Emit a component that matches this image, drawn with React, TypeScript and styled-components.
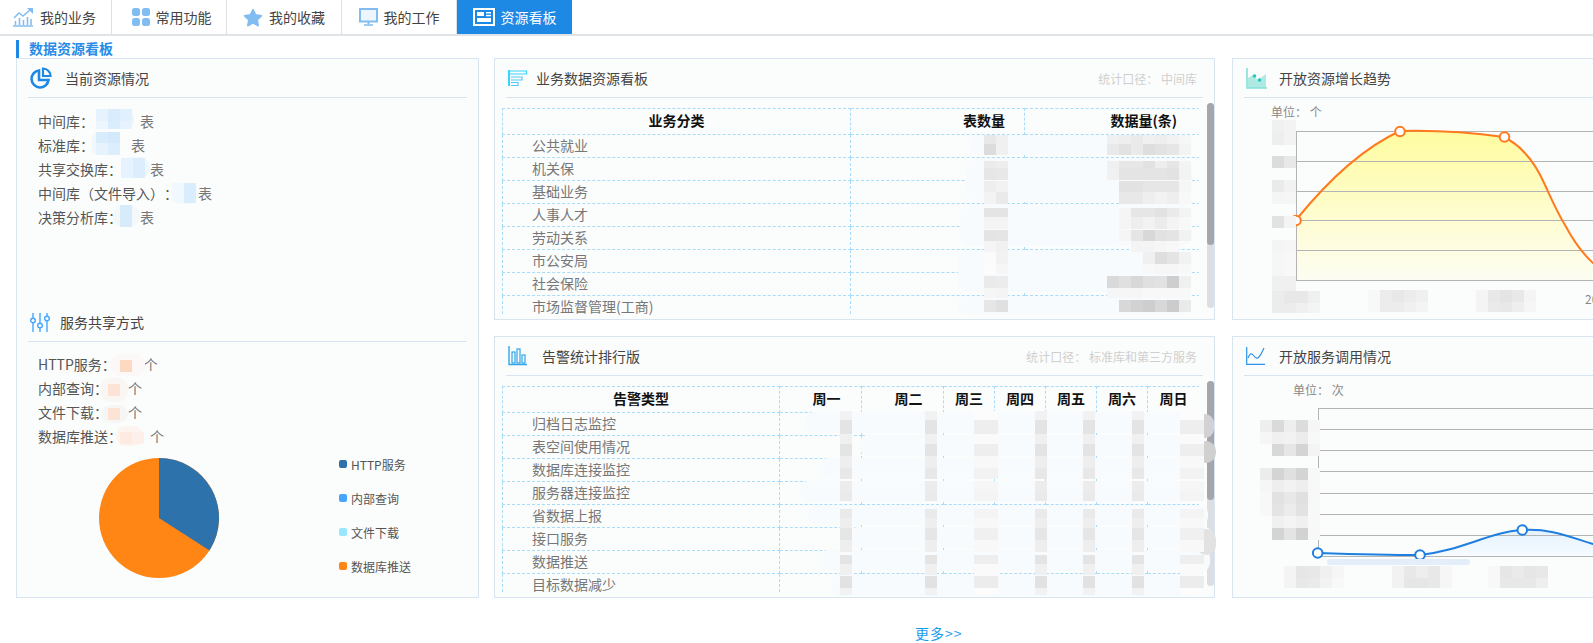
import React from "react";
import styled, { createGlobalStyle } from "styled-components";

const GlobalStyle = createGlobalStyle`
  html, body {
    margin: 0;
    padding: 0;
    height: 100%;
    overflow: hidden;
    background: #fff;
  }
  body {
    font-family: "Noto Sans CJK SC", "Liberation Sans", sans-serif;
    font-size: 14px;
    color: #555;
    text-spacing-trim: space-all;
  }
`;

const Page = styled.div`
  position: relative;
  width: 1593px;
  height: 643px;
  overflow: hidden;
`;

/* top tabs */
const Nav = styled.nav`
  display: flex;
  height: 34px;
  border-bottom: 2px solid #e1e4e7;
`;

const Tab = styled.div<{ $active?: boolean; $w: number; $shift?: number }>`
  display: flex;
  align-items: center;
  justify-content: center;
  gap: 6px;
  width: ${(p) => p.$w}px;
  box-sizing: border-box;
  height: 34px;
  padding-left: ${(p) => Math.max(p.$shift ?? 0, 0)}px;
  padding-right: ${(p) => Math.max(-(p.$shift ?? 0), 0)}px;
  border-right: ${(p) => (p.$active ? "0" : "1px solid #dddfe2")};
  background: ${(p) => (p.$active ? "#1e88e5" : "#fff")};
  color: ${(p) => (p.$active ? "#fff" : "#444")};
  font-size: 14px;
`;

const Heading = styled.h2`
  margin: 4px 0 0 16px;
  height: 18px;
  line-height: 16px;
  padding-left: 10px;
  border-left: 3px solid #1e88e5;
  font-size: 14px;
  font-weight: bold;
  color: #2a8ce6;
`;

const Board = styled.div`
  display: grid;
  grid-template-columns: 462px 722px 722px;
  grid-template-rows: 262px 262px;
  gap: 16px;
  padding-left: 16px;
`;

const Panel = styled.section<{ $tall?: boolean; $mid?: boolean }>`
  box-sizing: border-box;
  grid-row: ${(p) => (p.$tall ? "1 / span 2" : "auto")};
  margin-right: ${(p) => (p.$tall ? "-1px" : p.$mid ? "1px" : "0")};
  padding: 0 11px;
  border: 1px solid #d8e5f0;
  background: #fbfdfd;
  overflow: hidden;
`;

const PanelHead = styled.header`
  display: flex;
  align-items: center;
  height: 38px;
  padding-left: 2px;
  border-bottom: 1px solid #d5e4f0;
`;

const IconSlot = styled.span<{ $w: number }>`
  display: flex;
  align-items: center;
  width: ${(p) => p.$w}px;
  flex: none;
`;

const PanelTitle = styled.h3`
  margin: 0;
  font-size: 14px;
  font-weight: normal;
  color: #444;
  flex: 1;
`;

const Scope = styled.span`
  font-size: 12px;
  color: #cfcfcf;
  margin-right: 6px;
`;

/* left panel */
const Section = styled.div<{ $h?: number }>`
  height: ${(p) => (p.$h ? `${p.$h}px` : "auto")};
`;

const Stats = styled.ul<{ $top: number }>`
  list-style: none;
  margin: 0;
  padding: ${(p) => p.$top}px 0 0 10px;
`;

const Stat = styled.li`
  display: flex;
  height: 24px;
  line-height: 24px;
  color: #555;
`;

const Gap = styled.span<{ $w: number }>`
  width: ${(p) => p.$w}px;
  flex: none;
`;

const Unit = styled.span`
  color: #777;
`;

const PieRow = styled.div`
  display: flex;
`;

const PieBox = styled.svg`
  margin: 10px 0 0 71px;
  flex: none;
`;

const Legend = styled.ul`
  list-style: none;
  margin: -1px 0 0 120px;
  padding: 0;
`;

const LegendItem = styled.li`
  display: flex;
  align-items: center;
  gap: 4px;
  height: 34px;
  font-size: 12px;
  color: #555;
`;

const Swatch = styled.i<{ $c: string }>`
  width: 8px;
  height: 8px;
  border-radius: 2px;
  background: ${(p) => p.$c};
`;

/* tables */
const TableArea = styled.div`
  display: flex;
  margin: 10px 0 0 -4px;
`;

const TableClip = styled.div`
  width: 697px;
  height: 207px;
  overflow: hidden;
  flex: none;
`;

const Table = styled.table`
  width: 697px;
  table-layout: fixed;
  border-collapse: collapse;
`;

const Th = styled.th<{ $align?: string; $pl?: number; $pr?: number }>`
  height: 21px;
  padding: 0 ${(p) => p.$pr ?? 0}px 4px ${(p) => p.$pl ?? 0}px;
  border: 1px dashed #a9dcfa;
  font-size: 14px;
  font-weight: bold;
  color: #111;
  text-align: ${(p) => p.$align ?? "center"};
`;

const Td = styled.td`
  height: 20px;
  padding: 0 0 2px;
  border: 1px dashed #a9dcfa;
  font-size: 14px;
  line-height: 20px;
  color: #777;
  white-space: nowrap;
`;

const NameCell = styled(Td)`
  padding-left: 29px;
`;

const Track = styled.div`
  width: 7px;
  height: 205px;
  margin: -5px 0 0 8px;
  border-radius: 4px;
  background: #dcdee1;
  flex: none;
`;

const Thumb = styled.div<{ $h: number }>`
  height: ${(p) => p.$h}px;
  border-radius: 4px;
  background: #a5a6a9;
`;

/* right charts */
const ChartUnit = styled.div<{ $left: number }>`
  margin: 6px 0 0 ${(p) => p.$left}px;
  height: 16px;
  line-height: 16px;
  font-size: 12px;
  color: #888;
`;

const ChartSvg = styled.svg`
  display: block;
  margin-left: -11px;
`;

const More = styled.div`
  margin-top: 25px;
  padding-left: 915px;
  font-size: 14px;
  letter-spacing: 1px;
  color: #1a9bf0;
`;

/* redaction mosaics laid over the page */
const MosaicRow = styled.div.attrs<{ $x: number; $y: number; $h: number }>((p) => ({
  style: { left: p.$x, top: p.$y, height: p.$h },
}))`
  position: absolute;
  display: flex;
`;

const MosaicCell = styled.i`
  display: block;
  width: 12px;
  height: 100%;
`;

const Smear = styled.div.attrs<{ $x: number; $y: number; $w: number; $h: number; $c: string; $r: number }>((p) => ({
  style: { left: p.$x, top: p.$y, width: p.$w, height: p.$h, background: p.$c, borderRadius: p.$r },
}))`
  position: absolute;
`;

const shade = (t: string) => {
  if (t === "--") return "transparent";
  if (t.length === 2) return `#${t}${t}${t}`;
  return `#${t}`;
};

type Cells = [number, number, number, string];
type Blur = [number, number, number, number, string, number];

const PALE = "#f8fbfe";

const smears: Blur[] = [
  // left, blue values
  [96, 109, 38, 20, "#eef7fe", 9],
  [92, 132, 28, 23, "#f0f8fe", 5],
  [121, 157, 29, 21, "#eef7fe", 10],
  [172, 183, 26, 21, "#f1f8fe", 10],
  [113, 205, 27, 22, "#f3f8fb", 10],
  // left, orange values
  [110, 354, 35, 22, "#fbf8f7", 10],
  [100, 378, 28, 24, "#f9f6f4", 10],
  [101, 405, 27, 18, "#f6f6f5", 9],
  [116, 426, 27, 20, "#fdf4ef", 9],
  // first table
  [970, 135, 222, 20, PALE, 8],
  [966, 158, 226, 44, PALE, 10],
  [960, 204, 232, 42, PALE, 10],
  [958, 250, 234, 42, PALE, 10],
  [958, 296, 234, 18, PALE, 8],
  // second table
  [806, 412, 400, 21, PALE, 8],
  [860, 435, 346, 21, PALE, 8],
  [820, 458, 380, 21, PALE, 8],
  [800, 481, 396, 21, PALE, 8],
  [808, 505, 400, 20, PALE, 8],
  [850, 527, 362, 21, PALE, 8],
  [820, 550, 390, 21, PALE, 8],
  [832, 574, 370, 22, PALE, 8],
  // bits of the blur sitting on the scrollbar
  [1196, 414, 18, 24, "#d2d2d4", 12],
  [1196, 441, 20, 22, "#d0d0d1", 11],
  [1196, 529, 20, 26, "#e2e2e3", 13],
  // chart 2, pale strip under the line
  [1327, 559, 143, 6, "#e3eefa", 3],
];

const mosaics: Cells[] = [
  [96, 109, 12, "e6f3fe d8ecfd e0f0fd"],
  [96, 121, 8, "ecf6fe daedfd e6f3fe"],
  [96, 132, 11, "d8ecfc d4e9fb"],
  [96, 143, 12, "e6f3fd dcedfc"],
  [121, 158, 20, "e6f3fe dceefd"],
  [172, 183, 20, "f1f8fe d9edfd"],
  [120, 205, 22, "d8ebfb"],
  [120, 360, 12, "fdd9c1"],
  [108, 384, 12, "fde3d6"],
  [108, 408, 12, "fde3d6"],
  [120, 432, 12, "fdeae0 fdf0ea"],
];

// first table: value columns
[
  [135, 9, "e8 f0", "f0 ee ea f0 ee f2 f6"],
  [144, 11, "dc f0", "e9 e2 ea de e2 e6 f3"],
  [161, 7, "eb ee", "f0 e7 e7 e2 ee e6 f3"],
  [168, 12, "e6 e8", "f1 e4 e4 e4 e4 e2 f3"],
  [181, 11, "ee f2", "-- e2 e2 e6 e6 e6 f6"],
  [192, 12, "f3 ea", "-- e8 e8 ee f2 ee f8"],
  [208, 9, "e4 e4", "-- f5 e6 e6 e2 ea f3"],
  [217, 12, "f4 f4", "-- f5 ee f2 ec f4 f8"],
  [230, 11, "e4 e5", "-- f5 e5 d8 e2 e4 f2"],
  [241, 11, "f5 f1", "-- -- f4 f4 f6 f8 --"],
  [252, 12, "fb f2", "-- -- -- f0 de e4 f2"],
  [264, 10, "fc f6", "-- -- -- f8 f6 f6 f8"],
  [276, 12, "ea ec", "d9 e0 d8 e0 e2 ce f0"],
  [288, 10, "f6 f4", "f6 f6 f6 f8 f8 f8 f8"],
  [300, 12, "e6 e0", "-- d8 d2 ce d8 cc ea"],
].forEach(([y, h, a, b]) => {
  mosaics.push([984, y as number, h as number, a as string]);
  mosaics.push([1107, y as number, h as number, b as string]);
});

// second table: the same bands run down every day column
const bands: [number, number, string][] = [
  [411, 9, "f2"],
  [420, 14, "e4"],
  [434, 10, "f0"],
  [444, 12, "e4"],
  [456, 12, "ee"],
  [468, 11, "e8"],
  [481, 10, "ec"],
  [491, 10, "ea"],
  [509, 9, "ea"],
  [518, 10, "ee"],
  [528, 12, "e6"],
  [540, 12, "ee"],
  [555, 9, "e4"],
  [564, 11, "f0"],
  [576, 12, "e2"],
  [588, 7, "f2"],
];
const lighter = (t: string) => Math.min(255, parseInt(t, 16) + 10).toString(16);
bands.forEach(([y, h, c]) => {
  [840, 925, 1083, 1132].forEach((x) => mosaics.push([x, y, h, c]));
  mosaics.push([1035, y, h, c]);
  mosaics.push([974, y, h, `${lighter(c)} ${lighter(c)}`]);
  mosaics.push([1180, y, h, `${lighter(c)} ${lighter(c)}`]);
});

mosaics.push(
  // chart 1, y axis
  [1272, 120, 11, "f0 f3"],
  [1272, 131, 14, "ee f3"],
  [1272, 156, 12, "dc e8"],
  [1272, 180, 12, "ea f2"],
  [1272, 192, 12, "f5 f6"],
  [1272, 216, 12, "e2 f4"],
  [1272, 240, 12, "f4 f6"],
  [1272, 252, 24, "f6 f8"],
  [1272, 276, 15, "f0 f0"],
  // chart 1, x axis
  [1272, 291, 12, "ec e8 e8 f0"],
  [1272, 303, 10, "ec ec f0 f4"],
  [1368, 290, 12, "f8 ec e8 ec f0"],
  [1368, 302, 10, "f8 ec ec f0 f4"],
  [1476, 290, 12, "f4 e8 e4 e8 f4"],
  [1476, 302, 10, "f4 ea e8 ee f6"],
  // chart 2, y axis
  [1260, 420, 12, "ee da ee dc f6"],
  [1260, 432, 12, "f6 f0 f2 ec f8"],
  [1260, 444, 12, "-- d8 e6 d4 f4"],
  [1260, 468, 12, "ec d4 e0 d4 f8"],
  [1260, 480, 12, "f6 ee f2 ee f8"],
  [1260, 492, 12, "f8 e2 e8 e0 f8"],
  [1260, 504, 12, "f8 e4 ec e2 f8"],
  [1260, 516, 12, "-- f0 f4 f0 f8"],
  [1260, 528, 12, "-- d4 e4 d2 f8"],
  // chart 2, x axis
  [1284, 566, 12, "f4 e6 e8 f0 f6"],
  [1284, 578, 10, "f4 e8 ea f2 f8"],
  [1392, 566, 12, "f2 e8 ee e8 f6"],
  [1392, 578, 10, "f2 e6 e6 e8 f6"],
  [1488, 566, 12, "f8 e6 ea e6 e8"],
  [1488, 578, 10, "f8 e8 e8 e8 ee"]
);

const Redactions = () => (
  <>
    {smears.map(([x, y, w, h, c, r], i) => (
      <Smear key={i} $x={x} $y={y} $w={w} $h={h} $c={c} $r={r} />
    ))}
    {mosaics.map(([x, y, h, cells], i) => (
      <MosaicRow key={i} $x={x} $y={y} $h={h}>
        {cells.split(" ").map((t, j) => (
          <MosaicCell key={j} style={{ background: shade(t) }} />
        ))}
      </MosaicRow>
    ))}
  </>
);

/* icons */
const TabChartIcon = () => (
  <svg width="22" height="20" viewBox="0 0 22 20" fill="none" stroke="#82bdf2">
    <path d="M1 19h20" strokeWidth="1.5" />
    <path d="M3.5 18v-4M7.5 18v-7M11.5 18v-5M15.5 18v-8M19 18v-6" strokeWidth="1.6" />
    <path d="M2 11l5-5 4 3 8-7" strokeWidth="1.5" />
    <path d="M15 1h6v6z" fill="#82bdf2" stroke="none" />
  </svg>
);

const TabGridIcon = () => (
  <svg width="18" height="18" viewBox="0 0 18 18" fill="#82bdf2">
    <rect x="0" y="0" width="8" height="8" rx="2.5" />
    <rect x="10" y="0" width="8" height="8" rx="2.5" />
    <rect x="0" y="10" width="8" height="8" rx="2.5" />
    <rect x="10" y="10" width="8" height="8" rx="2.5" />
  </svg>
);

const TabStarIcon = () => (
  <svg width="20" height="19" viewBox="0 0 20 19">
    <path
      d="M10 1.5l2.6 5.4 5.9.8-4.3 4.1 1 5.9-5.2-2.8-5.2 2.8 1-5.9L1.500 7.700l5.900-.8z"
      fill="#82bdf2"
      stroke="#82bdf2"
      strokeWidth="1.6"
      strokeLinejoin="round"
    />
  </svg>
);

const TabScreenIcon = () => (
  <svg width="19" height="18" viewBox="0 0 19 18" fill="none">
    <rect x="1" y="1" width="17" height="12.500" fill="#eef6fd" stroke="#82bdf2" strokeWidth="2" />
    <path d="M9.500 14v2.500" stroke="#82bdf2" strokeWidth="2" />
    <path d="M5 17h9" stroke="#82bdf2" strokeWidth="1.500" />
  </svg>
);

const TabBoardIcon = () => (
  <svg width="22" height="18" viewBox="0 0 22 18">
    <rect x="0" y="0" width="22" height="18" fill="#fff" />
    <rect x="2" y="2" width="18" height="14" fill="#1e88e5" />
    <rect x="4" y="4" width="7" height="4" fill="#fff" />
    <rect x="13" y="4" width="5" height="1.500" fill="#fff" />
    <rect x="13" y="6.800" width="5" height="1.500" fill="#fff" />
    <rect x="4" y="10" width="14" height="4" fill="#fff" />
  </svg>
);

const PieIcon = () => (
  <svg width="22" height="22" viewBox="0 0 22 22" fill="none" stroke="#1e88e5" strokeWidth="2.600">
    <path d="M9 3.500a8.500 8.500 0 1 0 9.500 9.500H9z" />
    <path d="M13 1.500a7.500 7.500 0 0 1 7.500 7.500H13z" strokeWidth="2.200" />
  </svg>
);

const SlidersIcon = () => (
  <svg width="20" height="19" viewBox="0 0 20 19" fill="none" stroke="#45a5ff" strokeWidth="1.400">
    <path d="M3 0v5M3 10v9M10 0v10M10 15v4M17 0v3M17 8v11" />
    <circle cx="3" cy="7.500" r="2.300" />
    <circle cx="10" cy="12.500" r="2.300" />
    <circle cx="17" cy="5.500" r="2.300" />
  </svg>
);

const BarsIcon = () => (
  <svg width="20" height="16" viewBox="0 0 20 16" fill="none" stroke="#36d6ff">
    <path d="M1 0v16" strokeWidth="2" />
    <path d="M1.500 1h17v3h-17" strokeWidth="1.200" />
    <path d="M3 7h11v3H3" strokeWidth="1.200" stroke="#55c8f5" />
    <path d="M3 12.500h7v3H3" strokeWidth="1.200" stroke="#55c8f5" />
  </svg>
);

const ColumnsIcon = () => (
  <svg width="19" height="20" viewBox="0 0 19 20" fill="none" stroke="#2ea6e8" strokeWidth="1.200">
    <path d="M1 0v18.500h18" strokeWidth="1.400" />
    <rect x="4" y="6" width="3" height="11" />
    <rect x="9" y="3" width="3" height="14" />
    <rect x="14" y="9" width="3" height="8" />
  </svg>
);

const AreaIcon = () => (
  <svg width="21" height="21" viewBox="0 0 21 21">
    <path d="M2 20V10l5-3 5 5 8-6v14z" fill="#aee9e4" />
    <path d="M1 0v20h20" fill="none" stroke="#86e0d9" strokeWidth="1.600" />
    <circle cx="8.500" cy="8" r="1.800" fill="#29c4bb" />
    <circle cx="13.500" cy="12" r="1.800" fill="#29c4bb" />
  </svg>
);

const LineIcon = () => (
  <svg width="19" height="18" viewBox="0 0 19 18" fill="none" stroke="#2d93ea" strokeWidth="1.200">
    <path d="M.7 0v17.300H19" />
    <path d="M2 11c2-5 3.500-5 5.500-2.500S11 12 13 10s3-5 5-9" />
  </svg>
);

/* charts */
const GrowthChart = () => (
  <ChartSvg width="721" height="198" viewBox="1233 120 721 198">
    <defs>
      <linearGradient id="growthFill" x1="0" y1="0" x2="0" y2="1">
        <stop offset="0" stopColor="#fffca0" />
        <stop offset="1" stopColor="#fdfdf3" />
      </linearGradient>
    </defs>
    <path
      d="M1296 220C1330 178 1365 147 1400 131C1440 130 1475 133 1504 137C1522 146 1535 162 1545 185C1552 200 1556 210 1565 225C1573 240 1582 253 1593 263L1612 280H1296Z"
      fill="url(#growthFill)"
    />
    {[131.5, 161.5, 191.5, 220.5, 250.5, 280.5].map((y) => (
      <line key={y} x1="1296" x2="1700" y1={y} y2={y} stroke="#b4b4b4" />
    ))}
    <line x1="1296.500" x2="1296.500" y1="131" y2="281" stroke="#b4b4b4" />
    <path
      d="M1296 220C1330 178 1365 147 1400 131C1440 130 1475 133 1504 137C1522 146 1535 162 1545 185C1552 200 1556 210 1565 225C1573 240 1582 253 1593 263L1612 280"
      fill="none"
      stroke="#ff7a1f"
      strokeWidth="2"
    />
    <circle cx="1296" cy="220.500" r="4.800" fill="#fff" stroke="#ff7a1f" strokeWidth="2" />
    <circle cx="1400" cy="131.500" r="4.800" fill="#fff" stroke="#ff7a1f" strokeWidth="2" />
    <circle cx="1504.500" cy="137" r="4.800" fill="#fff" stroke="#ff7a1f" strokeWidth="2" />
    <text x="1585" y="304" fontSize="12" fill="#888">
      20
    </text>
  </ChartSvg>
);

const CallChart = () => (
  <ChartSvg width="721" height="197" viewBox="1233 399 721 197">
    <defs>
      <linearGradient id="callFill" x1="0" y1="0" x2="0" y2="1">
        <stop offset="0" stopColor="#e4f2fe" />
        <stop offset="1" stopColor="#f6fbff" />
      </linearGradient>
    </defs>
    <path
      d="M1318 554C1350 555 1390 556 1420 556C1460 552 1490 533 1522 531C1550 529 1570 538 1593 545L1640 557H1318Z"
      fill="url(#callFill)"
    />
    {[409.5, 430.5, 451.5, 472.5, 494.5, 515.5, 536.5, 557.5].map((y) => (
      <line key={y} x1="1318" x2="1700" y1={y} y2={y} stroke="#b4b4b4" />
    ))}
    <line x1="1318.500" x2="1318.500" y1="409" y2="558" stroke="#b4b4b4" />
    <path
      d="M1318 554C1350 555 1390 556 1420 556C1460 552 1490 533 1522 531C1550 529 1570 538 1593 545L1640 557"
      fill="none"
      stroke="#1e7fe0"
      strokeWidth="2"
    />
    <circle cx="1317.700" cy="554" r="4.800" fill="#fff" stroke="#1e7fe0" strokeWidth="2" />
    <circle cx="1420" cy="556" r="4.800" fill="#fff" stroke="#1e7fe0" strokeWidth="2" />
    <circle cx="1522.300" cy="531" r="4.800" fill="#fff" stroke="#1e7fe0" strokeWidth="2" />
  </ChartSvg>
);

const tabs = [
  { label: "我的业务", w: 112, icon: <TabChartIcon />, shift: -3 },
  { label: "常用功能", w: 115, icon: <TabGridIcon />, shift: 5 },
  { label: "我的收藏", w: 115, icon: <TabStarIcon /> },
  { label: "我的工作", w: 115, icon: <TabScreenIcon /> },
  { label: "资源看板", w: 115, icon: <TabBoardIcon />, active: true },
];

const resourceStats = [
  { label: "中间库：", gap: 46 },
  { label: "标准库：", gap: 37 },
  { label: "共享交换库：", gap: 28 },
  { label: "中间库（文件导入）：", gap: 20 },
  { label: "决策分析库：", gap: 18 },
];

const shareStats = [
  { label: "HTTP服务：", gap: 28 },
  { label: "内部查询：", gap: 20 },
  { label: "文件下载：", gap: 20 },
  { label: "数据库推送：", gap: 28 },
];

const legend = [
  { label: "HTTP服务", color: "#2e72ab" },
  { label: "内部查询", color: "#45a5ff" },
  { label: "文件下载", color: "#98e6ff" },
  { label: "数据库推送", color: "#ff8614" },
];

const businessRows = ["公共就业", "机关保", "基础业务", "人事人才", "劳动关系", "市公安局", "社会保险", "市场监督管理(工商)"];
const alarmRows = ["归档日志监控", "表空间使用情况", "数据库连接监控", "服务器连接监控", "省数据上报", "接口服务", "数据推送", "目标数据减少"];
const alarmCols = [277, 82, 82, 51, 51, 51, 51, 52];

export default function App() {
  return (
    <Page>
      <GlobalStyle />
      <Nav>
        {tabs.map((t) => (
          <Tab key={t.label} $w={t.w} $active={t.active} $shift={t.shift}>
            {t.icon}
            {t.label}
          </Tab>
        ))}
      </Nav>
      <Heading>数据资源看板</Heading>
      <Board>
        <Panel $tall>
          <Section $h={244}>
            <PanelHead>
              <IconSlot $w={35}>
                <PieIcon />
              </IconSlot>
              <PanelTitle>当前资源情况</PanelTitle>
            </PanelHead>
            <Stats $top={11}>
              {resourceStats.map((s) => (
                <Stat key={s.label}>
                  {s.label}
                  <Gap $w={s.gap} />
                  <Unit>表</Unit>
                </Stat>
              ))}
            </Stats>
          </Section>
          <Section>
            <PanelHead>
              <IconSlot $w={30}>
                <SlidersIcon />
              </IconSlot>
              <PanelTitle>服务共享方式</PanelTitle>
            </PanelHead>
            <Stats $top={10}>
              {shareStats.map((s) => (
                <Stat key={s.label}>
                  {s.label}
                  <Gap $w={s.gap} />
                  <Unit>个</Unit>
                </Stat>
              ))}
            </Stats>
            <PieRow>
              <PieBox width="120" height="120" viewBox="0 0 120 120">
                <circle cx="60" cy="60" r="60" fill="#ff8614" />
                <path d="M60 60V0A60 60 0 0 1 110.500 92.400Z" fill="#2e72ab" />
              </PieBox>
              <Legend>
                {legend.map((l) => (
                  <LegendItem key={l.label}>
                    <Swatch $c={l.color} />
                    {l.label}
                  </LegendItem>
                ))}
              </Legend>
            </PieRow>
          </Section>
        </Panel>

        <Panel $mid>
          <PanelHead>
            <IconSlot $w={28}>
              <BarsIcon />
            </IconSlot>
            <PanelTitle>业务数据资源看板</PanelTitle>
            <Scope>统计口径： 中间库</Scope>
          </PanelHead>
          <TableArea>
            <TableClip>
              <Table>
                <colgroup>
                  <col width="348" />
                  <col width="174" />
                  <col width="175" />
                </colgroup>
                <thead>
                  <tr>
                    <Th>业务分类</Th>
                    <Th $align="right" $pr={19}>
                      表数量
                    </Th>
                    <Th $align="right" $pr={22}>
                      数据量(条)
                    </Th>
                  </tr>
                </thead>
                <tbody>
                  {businessRows.map((r) => (
                    <tr key={r}>
                      <NameCell>{r}</NameCell>
                      <Td />
                      <Td />
                    </tr>
                  ))}
                </tbody>
              </Table>
            </TableClip>
            <Track>
              <Thumb $h={142} />
            </Track>
          </TableArea>
        </Panel>

        <Panel>
          <PanelHead>
            <IconSlot $w={33}>
              <AreaIcon />
            </IconSlot>
            <PanelTitle>开放资源增长趋势</PanelTitle>
          </PanelHead>
          <ChartUnit $left={27}>单位： 个</ChartUnit>
          <GrowthChart />
        </Panel>

        <Panel $mid>
          <PanelHead>
            <IconSlot $w={34}>
              <ColumnsIcon />
            </IconSlot>
            <PanelTitle>告警统计排行版</PanelTitle>
            <Scope>统计口径： 标准库和第三方服务</Scope>
          </PanelHead>
          <TableArea>
            <TableClip>
              <Table>
                <colgroup>
                  {alarmCols.map((w, i) => (
                    <col key={i} width={w} />
                  ))}
                </colgroup>
                <thead>
                  <tr>
                    <Th>告警类型</Th>
                    <Th $pl={12}>周一</Th>
                    <Th $pl={12}>周二</Th>
                    <Th>周三</Th>
                    <Th>周四</Th>
                    <Th>周五</Th>
                    <Th>周六</Th>
                    <Th>周日</Th>
                  </tr>
                </thead>
                <tbody>
                  {alarmRows.map((r) => (
                    <tr key={r}>
                      <NameCell>{r}</NameCell>
                      {alarmCols.slice(1).map((_, i) => (
                        <Td key={i} />
                      ))}
                    </tr>
                  ))}
                </tbody>
              </Table>
            </TableClip>
            <Track>
              <Thumb $h={119} />
            </Track>
          </TableArea>
        </Panel>

        <Panel>
          <PanelHead>
            <IconSlot $w={33}>
              <LineIcon />
            </IconSlot>
            <PanelTitle>开放服务调用情况</PanelTitle>
          </PanelHead>
          <ChartUnit $left={49}>单位： 次</ChartUnit>
          <CallChart />
        </Panel>
      </Board>
      <More>更多&gt;&gt;</More>
      <Redactions />
    </Page>
  );
}
